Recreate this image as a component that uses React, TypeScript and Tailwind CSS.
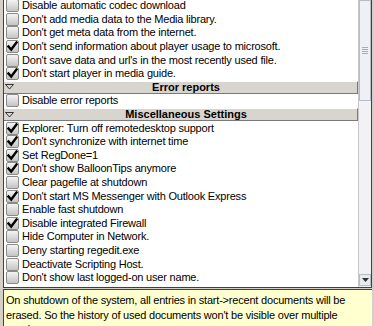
import React from "react";

type Item =
  | { kind: "row"; label: string; checked: boolean }
  | { kind: "header"; label: string };

const items: Item[] = [
  { kind: "row", label: "Disable automatic codec download", checked: false },
  { kind: "row", label: "Don't add media data to the Media library.", checked: false },
  { kind: "row", label: "Don't get meta data from the internet.", checked: false },
  { kind: "row", label: "Don't send information about player usage to microsoft.", checked: true },
  { kind: "row", label: "Don't save data and url's in the most recently used file.", checked: false },
  { kind: "row", label: "Don't start player in media guide.", checked: true },
  { kind: "header", label: "Error reports" },
  { kind: "row", label: "Disable error reports", checked: false },
  { kind: "header", label: "Miscellaneous Settings" },
  { kind: "row", label: "Explorer: Turn off remotedesktop support", checked: true },
  { kind: "row", label: "Don't synchronize with internet time", checked: true },
  { kind: "row", label: "Set RegDone=1", checked: true },
  { kind: "row", label: "Don't show BalloonTips anymore", checked: true },
  { kind: "row", label: "Clear pagefile at shutdown", checked: false },
  { kind: "row", label: "Don't start MS Messenger with Outlook Express", checked: true },
  { kind: "row", label: "Enable fast shutdown", checked: false },
  { kind: "row", label: "Disable integrated Firewall", checked: true },
  { kind: "row", label: "Hide Computer in Network.", checked: false },
  { kind: "row", label: "Deny starting regedit.exe", checked: false },
  { kind: "row", label: "Deactivate Scripting Host.", checked: false },
  { kind: "row", label: "Don't show last logged-on user name.", checked: false },
];

function Checkbox({ checked }: { checked: boolean }) {
  return (
    <div className="w-[13px] h-[13px] shrink-0 border border-[#8a8a8a] rounded-[2px] bg-gradient-to-b from-[#f4f4f4] via-[#dcdcdc] to-[#c4c4c4] flex items-center justify-center">
      {checked && (
        <svg width="11" height="11" viewBox="0 0 11 11">
          <path d="M1.5 5.5 L4.2 8.5 L9.5 1.5" fill="none" stroke="#000" strokeWidth="2.4" strokeLinecap="square" />
        </svg>
      )}
    </div>
  );
}

export default function App() {
  return (
    <div
      className="w-[374px] h-[326px] overflow-hidden bg-[#d4d0c8] flex flex-col text-[11px] tracking-[-0.2px] text-black"
      style={{ fontFamily: '"Liberation Sans", Arial, sans-serif' }}
    >
      <div className="h-[288px] flex pl-[3px] pr-[2px] shrink-0">
        <div className="flex-1 flex border-l border-r border-b border-[#404040] bg-white overflow-hidden">
          <div className="flex-1 overflow-hidden">
            <div className="mt-[-1px]">
              {items.map((it, i) =>
                it.kind === "row" ? (
                  <div key={i} className="h-[13.6px] flex items-center pl-[2px] gap-[3px] whitespace-nowrap">
                    <Checkbox checked={it.checked} />
                    <span className="leading-none">{it.label}</span>
                  </div>
                ) : (
                  <div
                    key={i}
                    className="h-[13.6px] flex items-center bg-[#d8d5ce] border-b border-r border-[#7a7a7a] border-t border-t-white whitespace-nowrap"
                  >
                    <div className="w-[11px] flex justify-center">
                      <svg width="9" height="6" viewBox="0 0 9 6">
                        <path d="M0.5 0.5 H8.5 L4.5 5 Z" fill="none" stroke="#333" strokeWidth="1" />
                      </svg>
                    </div>
                    <div className="flex-1 text-center font-bold leading-none tracking-[0px]">{it.label}</div>
                  </div>
                )
              )}
            </div>
          </div>
          <div className="w-[13px] bg-[#f2f2f4] border-l border-[#c8c8cc] flex flex-col shrink-0">
            <div className="h-[101px] bg-[#eef0f6] border border-[#b8bcc8] flex items-center justify-center">
              <div className="flex flex-col gap-[1px]">
                <div className="w-[6px] h-[1px] bg-[#a8acb8]" />
                <div className="w-[6px] h-[1px] bg-[#a8acb8]" />
                <div className="w-[6px] h-[1px] bg-[#a8acb8]" />
                <div className="w-[6px] h-[1px] bg-[#a8acb8]" />
              </div>
            </div>
            <div className="flex-1" />
            <div className="h-[12px] mb-[1px] bg-[#e8eaf0] border border-[#b8bcc8] flex items-center justify-center">
              <svg width="7" height="4" viewBox="0 0 7 4">
                <path d="M0 0 H7 L3.5 4 Z" fill="#333" />
              </svg>
            </div>
          </div>
        </div>
      </div>
      <div className="flex-1 pl-[3px] pr-[2px] pt-[1px]">
        <div className="h-full bg-[#ffffd0] border-t border-l border-[#404040] px-[2px] pt-[3px] leading-[14.5px] pr-[16px]">
          On shutdown of the system, all entries in start-&gt;recent documents will be erased. So the history of used documents won't be visible over multiple sessions.
        </div>
      </div>
    </div>
  );
}
